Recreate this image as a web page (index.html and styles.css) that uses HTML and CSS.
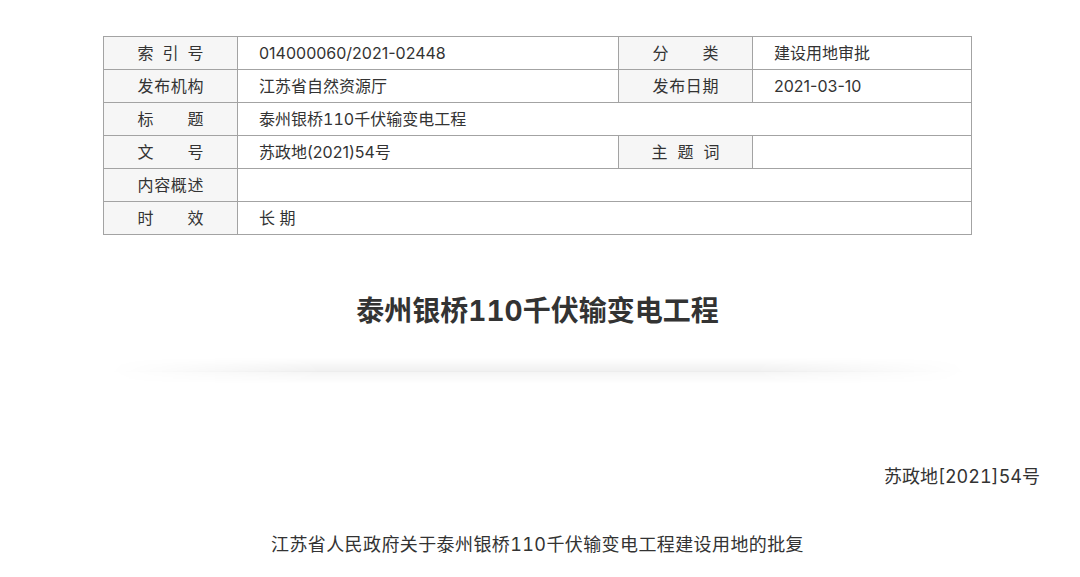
FILE: index.html
```html
<!DOCTYPE html>
<html lang="zh-CN">
<head>
    <meta charset="UTF-8">
    <meta name="viewport" content="width=device-width, initial-scale=1.0">
    <title>泰州银桥110千伏输变电工程</title>
    <link rel="stylesheet" href="styles.css">
</head>
<body>
    <div class="page">
        <!-- 信息公开目录 -->
        <table class="info">
            <tr>
                <td class="label"><span>索引号</span></td>
                <td class="value">014000060/2021-02448</td>
                <td class="label"><span>分类</span></td>
                <td class="value">建设用地审批</td>
            </tr>
            <tr>
                <td class="label"><span>发布机构</span></td>
                <td class="value">江苏省自然资源厅</td>
                <td class="label"><span>发布日期</span></td>
                <td class="value">2021-03-10</td>
            </tr>
            <tr>
                <td class="label"><span>标题</span></td>
                <td class="value tnum" colspan="3">泰州银桥110千伏输变电工程</td>
            </tr>
            <tr>
                <td class="label"><span>文号</span></td>
                <td class="value">苏政地(2021)54号</td>
                <td class="label"><span class="narrow">主题词</span></td>
                <td class="value"></td>
            </tr>
            <tr>
                <td class="label"><span>内容概述</span></td>
                <td class="value" colspan="3"></td>
            </tr>
            <tr>
                <td class="label"><span>时效</span></td>
                <td class="value" colspan="3">长 期</td>
            </tr>
        </table>

        <h1 class="title">泰州银桥110千伏输变电工程</h1>
        <div class="divider">
            <div class="divider-top"></div>
            <div class="divider-bottom"></div>
        </div>

        <p class="doc-no">苏政地[2021]54号</p>
        <p class="doc-title">江苏省人民政府关于泰州银桥110千伏输变电工程建设用地的批复</p>
    </div>
</body>
</html>
```

FILE: styles.css
```css
body {
    margin: 0;
    background: #fff;
    color: #333;
    font-family: Inter, "Noto Sans CJK SC", sans-serif;
}

.page {
    width: 1005px;
    margin: 0 0 0 35px;
    padding-top: 36px;
}

.tnum {
    font-feature-settings: "tnum";
}

.info {
    width: 869px;
    margin: 0 auto;
    border-collapse: collapse;
    font-size: 16px;
    table-layout: fixed;
}

.info td {
    height: 32px;
    padding: 0;
    border: 1px solid #a3a3a3;
    line-height: 32px;
}

.info td.label {
    width: 133px;
    background: #f6f6f6;
    text-align: center;
}

.info td.label span {
    display: inline-block;
    width: 66px;
    text-align: justify;
    text-align-last: justify;
    vertical-align: top;
}

.info td.label span.narrow {
    width: 68px;
}

.info td.value {
    padding-left: 21px;
}

.info tr td:nth-child(2) {
    width: 359px;
}

.title {
    margin: 56px 0 0;
    font-size: 28px;
    line-height: 40px;
    font-weight: bold;
    text-align: center;
    color: #333;
    font-feature-settings: "tnum";
}

.divider {
    width: 860px;
    margin: 27px auto 0;
    -webkit-mask-image: linear-gradient(to right, transparent, #000 25%, #000 75%, transparent);
    mask-image: linear-gradient(to right, transparent, #000 25%, #000 75%, transparent);
}

.divider-top {
    height: 13px;
    background: linear-gradient(to bottom, rgba(0, 0, 0, 0), rgba(0, 0, 0, 0.06));
}

.divider-bottom {
    height: 12px;
    border-top: 1px solid rgba(0, 0, 0, 0.07);
    background: linear-gradient(to bottom, rgba(0, 0, 0, 0.04), rgba(0, 0, 0, 0));
}

.doc-no {
    margin: 80px 0 0;
    font-size: 18px;
    line-height: 26px;
    text-align: right;
    font-feature-settings: "tnum";
}

.doc-title {
    margin: 41px 0 0;
    font-size: 18px;
    line-height: 28px;
    text-align: center;
    letter-spacing: 0.4px;
    font-feature-settings: "tnum";
}
```
